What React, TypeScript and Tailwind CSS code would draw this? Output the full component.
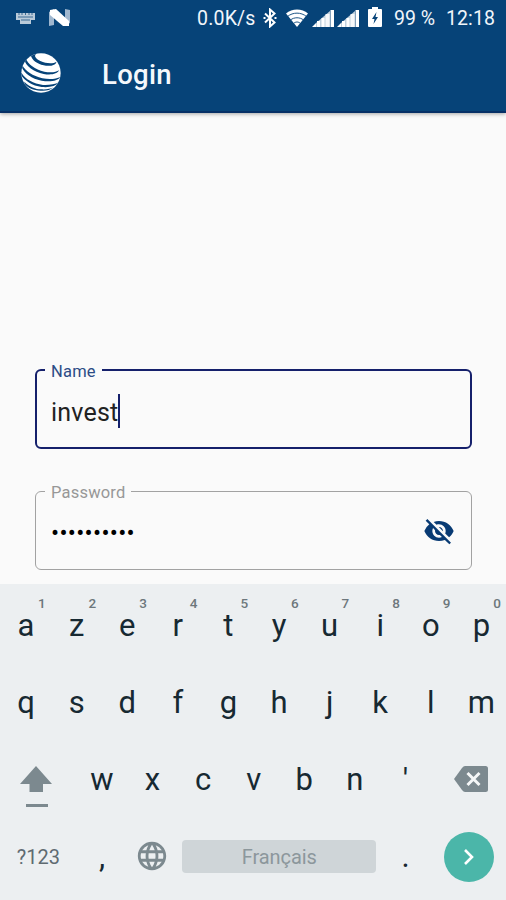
import { useState } from 'react';
import type { ReactNode } from 'react';
import { MdVisibilityOff, MdLanguage } from 'react-icons/md';

const topRow = ['a', 'z', 'e', 'r', 't', 'y', 'u', 'i', 'o', 'p'];
const homeRow = ['q', 's', 'd', 'f', 'g', 'h', 'j', 'k', 'l', 'm'];
const bottomRow = ['w', 'x', 'c', 'v', 'b', 'n', "'"];

function GlobeLogo() {
  return (
    <svg viewBox="0 0 120 120" className="mb-[3px] w-10 h-10">
      <clipPath id="globe">
        <circle cx="60" cy="60" r="59" />
      </clipPath>
      <g clipPath="url(#globe)">
        <rect width="120" height="120" fill="#fff" />
        <g fill="#064378">
          <path d="M22 0 L50 0 C36 6 42 16 58 24 C76 32 96 33 106 26 C106 37 86 41 68 37 C48 32 34 22 30 9 Z" />
          <path d="M4 20 L14 14 C20 34 42 48 70 56 C88 60 106 58 114 52 C110 63 90 67 68 63 C38 56 14 40 11 22 Z" />
          <path d="M-2 38 L4 36 C12 54 36 69 64 76 C86 80 106 78 118 72 C110 84 88 87 62 83 C32 77 10 60 3 44 Z" />
          <path d="M-4 60 L2 60 C12 79 38 92 66 96 C84 97 102 94 114 88 C104 100 86 104 62 102 C34 98 12 84 0 66 Z" />
          <path d="M10 86 C26 103 44 108 60 109 C76 110 88 108 98 103 C88 112 74 114 58 113 C38 112 20 104 10 92 Z" />
        </g>
      </g>
    </svg>
  );
}

function SignalBars() {
  return (
    <svg viewBox="0 0 22 18" className="w-[22px] h-[18px]" fill="#fff">
      <path d="M0 18 L4 14 V18 Z" />
      <path d="M4 18 V14 L18 2 V18 Z" opacity=".75" />
      <rect x="5" y="12" width="3" height="6" />
      <rect x="9.5" y="9" width="3" height="9" />
      <rect x="13.5" y="5" width="4" height="13" opacity=".85" />
      <rect x="18.5" y="1" width="3.5" height="17" />
    </svg>
  );
}

function StatusBar() {
  return (
    <div className="flex items-center h-9 pl-4 pr-[10px] text-[19.5px] text-[#f1f6fb]">
      <svg viewBox="0 0 19 11" className="w-[19px] h-[11px]" fill="#fff">
        <path d="M0 0 H19 V7 H15 V11 H4 V7 H0 Z" opacity=".72" />
        <path d="M3 0V2M6 0V2M9.5 0V2M13 0V2M16 0V2M2 4H17M5 7H14" stroke="#064378" strokeWidth="1" opacity=".7" />
      </svg>
      <svg viewBox="0 0 21 17" className="ml-[14px] mb-px w-[21px] h-[17px]">
        <path d="M0 3 L5 0 V16 L0 17 Z M16 0 L21 1 V14 L16 17 Z" fill="#9fb7cf" />
        <path d="M1 1 L7 0 L20 12 V17 L14 17 L1 6 Z" fill="#fff" />
      </svg>
      <div className="flex flex-1 items-center justify-end">
        <span className="w-[61px] pt-0.5 whitespace-nowrap tracking-[0.2px]">0.0K/s</span>
        <svg viewBox="0 0 14 20" className="ml-[5px] w-[14px] h-5" fill="none" stroke="#fff" strokeWidth="2">
          <path d="M2 5.5 L11.5 14.5 L7 18.5 V1.5 L11.5 5.5 L2 14.5" />
          <path d="M0.5 10 H2.5 M11.5 10 H13.5" />
        </svg>
        <svg viewBox="0 0 22 18" className="ml-[9px] w-[22px] h-[18px]">
          <path d="M0 4.5 C6 -1 16 -1 22 4.5 L11 18 Z" fill="#fff" />
          <path d="M1.5 7.5 C7 3 15 3 20.5 7.5 M4.5 11 C8 8 14 8 17.5 11 M7.5 14.5 C9.5 12.5 12.5 12.5 14.5 14.5" fill="none" stroke="#064378" strokeWidth=".9" />
        </svg>
        <span className="ml-1 mr-px flex gap-[3px]">
          <SignalBars />
          <SignalBars />
        </span>
        <svg viewBox="0 0 14 20" className="ml-[8px] mr-px mb-0.5 w-[14px] h-5">
          <path d="M4 0 H10 V2 H13 Q14 2 14 3 V19 Q14 20 13 20 H1 Q0 20 0 19 V3 Q0 2 1 2 H4 Z" fill="#fff" />
          <path d="M8.5 5 L4 12 H6.5 L5.5 17 L10 10 H7.5 Z" fill="#064378" />
        </svg>
        <span className="ml-[11px] w-[43px] pt-0.5 whitespace-nowrap">99 %</span>
        <span className="ml-[9px] w-[50px] pt-0.5 whitespace-nowrap tracking-[0.1px]">12:18</span>
      </div>
    </div>
  );
}

function Key({ label, hint }: { label: string; hint?: number }) {
  return (
    <button className="relative flex-none w-[50.6px] h-[77px] pl-[1.5px] text-[31px] leading-none text-[#172932]">
      {label}
      {hint !== undefined && (
        <span className="absolute left-[38px] top-[8px] text-[13.5px] leading-4 font-medium text-[#6d777c]">{hint}</span>
      )}
    </button>
  );
}

function Field({ label, focused, children }: { label: string; focused?: boolean; children: ReactNode }) {
  return (
    <fieldset
      className={
        focused
          ? 'h-[89px] rounded-md border-2 border-[#15206b] pl-2'
          : 'h-[89px] rounded-md border-[1.5px] border-[#a2a2a2] pl-[9px]'
      }
    >
      <legend
        className={
          focused
            ? 'h-5 px-[6px] text-[16.5px] leading-6 tracking-[0.2px] text-[#2c4c86]'
            : 'h-5 px-[6px] text-[16.5px] leading-6 tracking-[0.2px] text-[#979797]'
        }
      >
        {label}
      </legend>
      <div className="flex items-center h-[62px] pl-[6px] pr-4">{children}</div>
    </fieldset>
  );
}

export default function App() {
  const [name] = useState('invest');
  const [password] = useState('••••••••••');

  return (
    <div className="flex flex-col w-[506px] h-[900px] overflow-hidden bg-[#fafafa] font-[Roboto,sans-serif]">
      <header className="relative h-[113px] flex-none bg-[#064378] border-b-2 border-[#073066] shadow-[0_1px_4px_rgba(0,0,0,0.35)]">
        <StatusBar />
        <div className="flex items-center pl-[20.5px] pt-[17px]">
          <GlobeLogo />
          <h1 className="ml-[41.5px] pt-px text-[27.5px] leading-10 font-medium tracking-[0.3px] text-[#f4f8fc]">Login</h1>
        </div>
      </header>

      <main className="flex flex-col gap-[32px] h-[471px] flex-none pt-[247px] pl-[35px] pr-[34px]">
        <Field label="Name" focused>
          <span className="pt-[3px] text-[25px] leading-8 tracking-[0.2px] text-[#222]">{name}</span>
          <span className="-ml-[0.5px] w-[2.5px] h-[34px] bg-[#15206b]" />
        </Field>
        <Field label="Password">
          <span className="flex-1 pt-0.5 text-[24px] leading-8 tracking-[0.3px] text-black">{password}</span>
          <MdVisibilityOff className="mb-[3px] w-8 h-8 text-[#083a73]" />
        </Field>
      </main>

      <section className="flex-1 bg-[#eceff1] pt-[3px]">
        <div className="flex">
          {topRow.map((k, i) => (
            <Key key={k} label={k} hint={(i + 1) % 10} />
          ))}
        </div>
        <div className="flex">
          {homeRow.map((k) => (
            <Key key={k} label={k} />
          ))}
        </div>
        <div className="flex">
          <button className="flex flex-col items-center w-[75.9px] h-[77px] pt-[25px] pr-1">
            <svg viewBox="0 0 32 42" className="w-8 h-[42px]" fill="#7c898f">
              <path d="M16 0 L32 18 H23 V26 H9.5 V18 H0 Z" />
              <rect x="6" y="38" width="22" height="3" />
            </svg>
          </button>
          {bottomRow.map((k) => (
            <Key key={k} label={k} />
          ))}
          <button className="flex items-center justify-center w-[75.9px] h-[77px] pl-[7px] pb-[2px]">
            <svg viewBox="0 0 34 26" className="w-[34px] h-[26px]">
              <path d="M8 2 Q9.5 0 11 0 H31.5 Q34 0 34 2.5 V23.5 Q34 26 31.5 26 H11 Q9.5 26 8 24 L0 13 Z" fill="#7c898f" />
              <path d="M13.5 7 L25.5 19 M25.5 7 L13.5 19" stroke="#f5f7f8" strokeWidth="3" />
            </svg>
          </button>
        </div>
        <div className="flex items-center">
          <button className="w-[75.9px] h-[77px] pl-px text-[20px] text-[#5f6b71]">?123</button>
          <Key label="," />
          <button className="flex items-center justify-center w-[50.6px] h-[77px] pb-px">
            <MdLanguage className="w-[34px] h-[34px] text-[#7c898f]" />
          </button>
          <button className="ml-[5px] mr-[3px] w-[194.4px] h-[33px] rounded bg-[#cfd5d8] text-[20px] tracking-[-0.1px] text-[#8c979c]">Français</button>
          <Key label="." />
          <button className="ml-[14px] flex items-center justify-center w-[50px] h-[50px] rounded-full bg-[#4bb6a9]">
            <svg viewBox="0 0 10 16" className="w-[10px] h-4" fill="none" stroke="#fff" strokeWidth="2.6">
              <path d="M1 1 L8 8 L1 15" />
            </svg>
          </button>
        </div>
      </section>
    </div>
  );
}
